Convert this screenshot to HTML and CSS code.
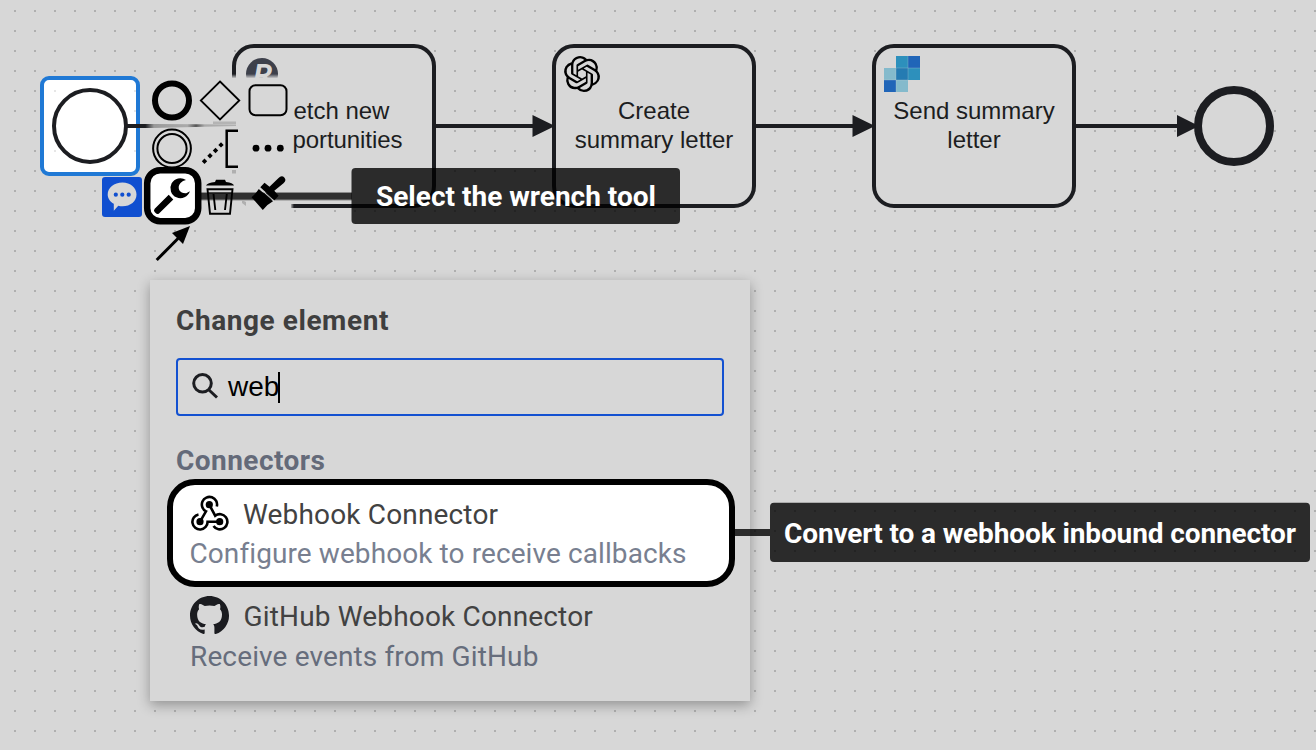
FILE: index.html
```html
<!DOCTYPE html>
<html lang="en">
<head>
<meta charset="utf-8">
<title>Modeler</title>
<link rel="stylesheet" href="styles.css">
</head>
<body>
<main class="stage">
  <svg class="canvas" viewBox="0 0 1316 750" width="1316" height="750">
    <defs>
      <pattern id="grid" x="14" y="10" width="20" height="20" patternUnits="userSpaceOnUse"><rect width="2" height="2" fill="#afafaf"/></pattern>
      <linearGradient id="fadeLine" gradientUnits="userSpaceOnUse" x1="128" y1="0" x2="236" y2="0">
        <stop offset="0" stop-color="#1c1d21"/><stop offset=".16" stop-color="#1c1d21"/><stop offset=".24" stop-color="#999"/><stop offset=".55" stop-color="#aaa"/><stop offset=".63" stop-color="#555"/><stop offset=".71" stop-color="#aaa"/><stop offset="1" stop-color="#b0b0b0"/>
      </linearGradient>
      <linearGradient id="fadeDown" x1="0" y1="0" x2="0" y2="1"><stop offset="0" stop-color="#d7d7d7" stop-opacity="0"/><stop offset="1" stop-color="#d7d7d7"/></linearGradient>
      <linearGradient id="fadeRight" x1="0" y1="0" x2="1" y2="0"><stop offset="0" stop-color="#d7d7d7"/><stop offset="1" stop-color="#d7d7d7" stop-opacity="0"/></linearGradient>
    </defs>
    <rect width="1316" height="750" fill="url(#grid)"/>

    <!-- tasks -->
    <g class="task">
      <rect x="234" y="46" width="200" height="160" rx="20"/>
      <rect x="554" y="46" width="200" height="160" rx="20"/>
      <rect x="874" y="46" width="200" height="160" rx="20"/>
    </g>
    <circle cx="262" cy="74" r="16" fill="#3d404b"/>
    <text class="badge" x="253.500" y="84.500">R</text>
    <rect x="228" y="74" width="62" height="4.500" fill="url(#fadeDown)"/>
    <rect x="145" y="78" width="146" height="144" fill="#d7d7d7"/>
    <rect x="290" y="200" width="4" height="10" fill="url(#fadeRight)"/>

    <!-- sequence flows -->
    <g class="flow">
      <path d="M436 126H540M756 126H860M1076 126H1185"/>
      <path class="head" d="M532.500 115L555 126L532.500 137zM852.500 115L875 126L852.500 137zM1177 115L1199 126L1177 137z"/>
    </g>
    <circle class="end" cx="1234" cy="126" r="36"/>

    <!-- start event -->
    <rect x="42" y="78" width="96" height="96" rx="6" fill="#fff"/>
    <g fill="#e6e6e6"><path d="M54 90h2v2h-2zM134 90h2v2h-2zM134 110h2v2h-2zM134 150h2v2h-2zM54 150h2v2h-2z"/></g>
    <rect x="42" y="78" width="96" height="96" rx="7" fill="none" stroke="#2079d5" stroke-width="4"/>
    <path d="M127 124H153L236 124.500V126L153 128H127z" fill="url(#fadeLine)"/>
    <rect x="213" y="121.500" width="23" height="2.500" fill="#b4b4b4"/>
    <circle class="start" cx="90" cy="126" r="36"/>

    <text class="label" x="293.400" y="119">etch new</text>
    <text class="label" x="292.500" y="148" textLength="110">portunities</text>
    <g class="label" text-anchor="middle">
      <text x="654" y="119">Create</text><text x="654" y="148">summary letter</text>
      <text x="974" y="119">Send summary</text><text x="974" y="148">letter</text>
    </g>

    <g transform="translate(564 56) scale(1.5)"><path d="M22.2819 9.8211a5.9847 5.9847 0 0 0-.5157-4.9108 6.0462 6.0462 0 0 0-6.5098-2.9A6.0651 6.0651 0 0 0 4.9807 4.1818a5.9847 5.9847 0 0 0-3.9977 2.9 6.0462 6.0462 0 0 0 .7427 7.0966 5.98 5.98 0 0 0 .511 4.9107 6.051 6.051 0 0 0 6.5146 2.9001A5.9847 5.9847 0 0 0 13.2599 24a6.0557 6.0557 0 0 0 5.7718-4.2058 5.9894 5.9894 0 0 0 3.9977-2.9001 6.0557 6.0557 0 0 0-.7475-7.0729zm-9.022 12.6081a4.4755 4.4755 0 0 1-2.8764-1.0408l.1419-.0804 4.7783-2.7582a.7948.7948 0 0 0 .3927-.6813v-6.7369l2.02 1.1686a.071.071 0 0 1 .038.052v5.5826a4.504 4.504 0 0 1-4.4945 4.4944zm-9.6607-4.1254a4.4708 4.4708 0 0 1-.5346-3.0137l.142.0852 4.783 2.7582a.7712.7712 0 0 0 .7806 0l5.8428-3.3685v2.3324a.0804.0804 0 0 1-.0332.0615L9.74 19.9502a4.4992 4.4992 0 0 1-6.1408-1.6464zM2.3408 7.8956a4.485 4.485 0 0 1 2.3655-1.9728V11.6a.7664.7664 0 0 0 .3879.6765l5.8144 3.3543-2.0201 1.1685a.0757.0757 0 0 1-.071 0l-4.8303-2.7865A4.504 4.504 0 0 1 2.3408 7.872zm16.5963 3.8558L13.1038 8.364 15.1192 7.2a.0757.0757 0 0 1 .071 0l4.8303 2.7913a4.4944 4.4944 0 0 1-.6765 8.1042v-5.6772a.79.79 0 0 0-.407-.667zm2.0107-3.0231l-.142-.0852-4.7735-2.7818a.7759.7759 0 0 0-.7854 0L9.409 9.2297V6.8974a.0662.0662 0 0 1 .0284-.0615l4.8303-2.7866a4.4992 4.4992 0 0 1 6.6802 4.66zM8.3065 12.863l-2.02-1.1638a.0804.0804 0 0 1-.038-.0567V6.0742a4.4992 4.4992 0 0 1 7.3757-3.4537l-.142.0805L8.704 5.459a.7948.7948 0 0 0-.3927.6813zm1.0976-2.3654l2.602-1.4998 2.6069 1.4998v2.9994l-2.5974 1.4997-2.6067-1.4997Z"/></g>
    <g transform="translate(884 56)">
      <path d="M0 12h12v12H0zM12 24h12v12H12z" fill="#84bacc"/>
      <path d="M12 0h12v12H12zM24 12h12v12H24z" fill="#2d90bc"/>
      <path d="M24 0h12v12H24zM0 24h12v12H0z" fill="#2065b8"/>
      <path d="M12 12h12v12H12z" fill="#257bb2"/>
      <path d="M0 24h24M12 12h24M24 0v24M12 12v24" fill="none" stroke="#d7d7d7" stroke-opacity=".25"/>
    </g>

    <!-- context pad -->
    <path d="M201 192.500H352V200H201z" fill="#303030"/>
    <path d="M201 192.500H352M201 200H352" stroke="#8b8b8b"/>
    <g class="pad">
      <circle cx="172" cy="100.500" r="17" stroke-width="6"/>
      <path d="M220 81.500L239.300 100.500L220 119.500L200.800 100.500z" stroke-width="1.800"/>
      <circle cx="172" cy="148.500" r="18.900" stroke-width="2"/>
      <circle cx="172" cy="148.500" r="14.600" stroke-width="2"/>
      <rect x="249.500" y="85.200" width="37" height="30" rx="6" stroke-width="2"/>
      <path d="M238 130.800H226.700V166.800H238" stroke-width="2.500"/>
      <g class="solid">
        <path d="M204.500 158.600l2.700 2.700-2.700 2.700-2.700-2.700zM210 153.100l2.700 2.700-2.700 2.700-2.700-2.700zM215.500 147.800l2.700 2.700-2.700 2.700-2.700-2.700zM221 142.200l2.700 2.700-2.700 2.700-2.700-2.700z"/>
        <circle cx="256" cy="148.200" r="3.400"/><circle cx="268" cy="148.200" r="3.400"/><circle cx="280.300" cy="148.200" r="3.400"/>
      </g>
    </g>
    <path d="M232 170h4v3.500h-4zM242 200l4 2v4l-4-3z" fill="#afafaf"/>
    <rect x="102" y="177" width="40" height="40" rx="3" fill="#104fd0"/>
    <path d="M122.500 182.500c8 0 14 5.300 14 12s-6 11.800-14 11.800c-1.500 0-3-.2-4.200-.6l-4.500 5V203.700c-3.800-2-6.100-5.300-6.100-9.200 0-6.700 6.300-12 14.800-12z" fill="#d7d7d7"/>
    <g fill="#104fd0"><circle cx="115.800" cy="194.700" r="2.100"/><circle cx="122.300" cy="194.700" r="2.100"/><circle cx="128.700" cy="194.700" r="2.100"/></g>
    <rect x="147.200" y="170.200" width="51" height="51" rx="13" fill="#fff" stroke="#000" stroke-width="6.500"/>
    <path d="M186 179.900A10 10 0 1 0 189.900 191.300L186.300 193.200Q181.500 193.600 179.300 190.300Q177.600 186.300 180.500 183Q182.700 180.500 186 179.900z"/>
    <path d="M168.700 194.800L173.300 199.400L159 213.400Q157.200 214.600 155.600 213L154.600 212Q153.200 210.400 154.700 208.700z"/>
    <!-- trash -->
    <path d="M206 185.500q1.500-2.500 9-3.400l1-2.400h9l1 2.400q7 .9 8 3.400z"/>
    <g fill="none" stroke="#000"><path d="M207.500 189.300H232.500L230 213.700H210z" stroke-width="1.900"/><path d="M208 193H232" stroke-width="1"/><path d="M213.500 194L215.300 210M226.800 194L225 210" stroke-width="1.900"/></g>
    <!-- brush -->
    <path d="M251.500 197.300Q255.500 194 258.800 189L273 201.300Q267 204.500 262.800 210z"/>
    <path d="M260.300 187.200L264.500 182.800L269.500 186.700L278.300 178.200Q281.700 174.800 284.300 177.600T283.500 183.300L274.300 190.800L278.600 195.800L274.500 200.200z"/>
    <path d="M259.400 188L273.800 200.800" stroke="#d7d7d7" stroke-width="1"/>
    <path d="M156.700 260L179 237.500" stroke="#000" stroke-width="3"/><path d="M190 226L183 244L172 233z"/>

    <!-- first callout -->
    <rect x="351.500" y="168" width="328.500" height="56" rx="4" fill="#000" fill-opacity=".8"/>
    <text class="callout" x="376" y="206" textLength="280">Select the wrench tool</text>
  </svg>

  <section class="popup">
    <h1 class="title">Change element</h1>
    <div class="search">
      <svg class="glass" viewBox="0 0 28 28" width="28" height="28"><circle cx="10.500" cy="11.300" r="8.800"/><path d="M17 18L25 25.500"/></svg>
      <span>web</span><i class="caret"></i>
    </div>
    <h2 class="group">Connectors</h2>
    <article class="entry chosen">
      <div class="name">
        <svg viewBox="0 0 40 40" width="40" height="40">
          <g fill="none" stroke="#000" stroke-width="2.600"><path d="M10 27.700L16 17.300A7.600 7.600 0 1 1 26.800 12.500M19.300 10.700L25.200 21.700A7.600 7.600 0 1 1 23.500 32M29.700 27.700H17.600A7.600 7.600 0 1 1 8.500 20.400"/></g>
          <circle cx="19.300" cy="10.700" r="3.600"/><circle cx="10" cy="27.700" r="3.600"/><circle cx="29.700" cy="27.700" r="3.600"/>
        </svg>
        <span>Webhook Connector</span>
      </div>
      <p class="note">Configure webhook to receive callbacks</p>
    </article>
    <article class="entry">
      <div class="name wide">
        <svg viewBox="0 0 40 40" width="40" height="40"><g transform="scale(2.44)"><path fill="#1b1c20" d="M8 0C3.58 0 0 3.58 0 8c0 3.540 2.290 6.530 5.470 7.590.4.070.55-.17.55-.38 0-.19-.01-.82-.01-1.490-2.010.37-2.530-.49-2.690-.94-.09-.23-.48-.94-.82-1.130-.28-.15-.68-.52-.01-.53.63-.01 1.080.58 1.230.82.72 1.210 1.870.87 2.330.66.07-.52.28-.87.51-1.070-1.780-.2-3.640-.89-3.640-3.950 0-.87.31-1.590.82-2.150-.08-.2-.36-1.020.08-2.120 0 0 .67-.21 2.200.82.64-.18 1.320-.27 2-.27s1.360.09 2 .27c1.530-1.040 2.200-.82 2.200-.82.44 1.100.16 1.920.08 2.120.51.56.82 1.270.82 2.150 0 3.070-1.870 3.750-3.650 3.950.29.25.54.73.54 1.480 0 1.070-.01 1.930-.01 2.200 0 .21.15.46.55.38A8.010 8.010 0 0 0 16 8c0-4.420-3.580-8-8-8z"/></g></svg>
        <span>GitHub Webhook Connector</span>
      </div>
      <p class="note dim">Receive events from GitHub</p>
    </article>
  </section>

  <svg class="hint" viewBox="0 0 576 60" width="576" height="60">
    <rect y="27" width="36" height="7" fill-opacity=".8"/>
    <rect x="36" y=".7" width="540" height="59.300" rx="4" fill-opacity=".8"/>
    <text class="callout" x="50" y="41" textLength="512">Convert to a webhook inbound connector</text>
  </svg>
</main>
</body>
</html>
```
FILE: styles.css
```css
* { box-sizing: border-box; }
body { margin: 0; background: #d7d7d7; }
.stage { position: relative; width: 1316px; height: 750px; overflow: hidden; font-family: Roboto, "Noto Sans", sans-serif; }
.canvas { display: block; }
.task rect { fill: #d7d7d7; stroke: #1c1d21; stroke-width: 4; }
.flow path { fill: none; stroke: #1c1d21; stroke-width: 4; }
.flow .head { fill: #1c1d21; stroke: none; }
.start { fill: #fff; stroke: #1c1d21; stroke-width: 4; }
.end { fill: #d7d7d7; stroke: #1c1d21; stroke-width: 8; }
.label { font: 24px "Liberation Sans", Arial, sans-serif; fill: #1c1d21; }
.badge { font: italic bold 30px Roboto, sans-serif; fill: #d7d7d7; }
.pad { fill: none; stroke: #000; }
.pad .solid { fill: #000; stroke: none; }
.callout { font: bold 28px Roboto, sans-serif; fill: #fff; }

.popup { position: absolute; left: 150px; top: 280px; width: 600px; height: 421px; padding: 21px 26px 0; background: #d7d7d7; box-shadow: 0 4px 12px rgba(0, 0, 0, .32); }
.title, .group { margin: 0; font-size: 28px; line-height: 40px; font-weight: 700; white-space: nowrap; }
.title { color: #3f3f3f; letter-spacing: .57px; }
.group { color: #646a79; margin-top: 25px; letter-spacing: .45px; }
.search { display: flex; align-items: center; height: 58px; margin-top: 17px; padding-left: 14px; border: 2px solid #1351d1; border-radius: 4px; font: 28px/54px "Liberation Sans", Arial, sans-serif; color: #000; }
.glass { margin: 0 8px 2px 0; fill: none; stroke: #1c1d21; stroke-width: 3; }
.caret { width: 2px; height: 31px; margin-left: -1px; background: #000; }
.entry { margin: 0 -10px; height: 102px; padding: 9px 24px 0; }
.chosen { height: 108px; margin: -2px -11px 0 -9.500px; padding: 9px 18px 0 17px; background: #fff; border: 6.500px solid #000; border-radius: 28px; }
.name { display: flex; align-items: center; gap: 13.500px; height: 40px; font-size: 28px; letter-spacing: .16px; color: #424242; white-space: nowrap; }
.name svg { flex: none; }
.note { margin: 0; font-size: 28px; line-height: 40px; letter-spacing: .09px; color: #787f90; white-space: nowrap; }
.dim { color: #666d7c; letter-spacing: .13px; padding-top: 1px; }
.hint { position: absolute; left: 734px; top: 502px; }
```
